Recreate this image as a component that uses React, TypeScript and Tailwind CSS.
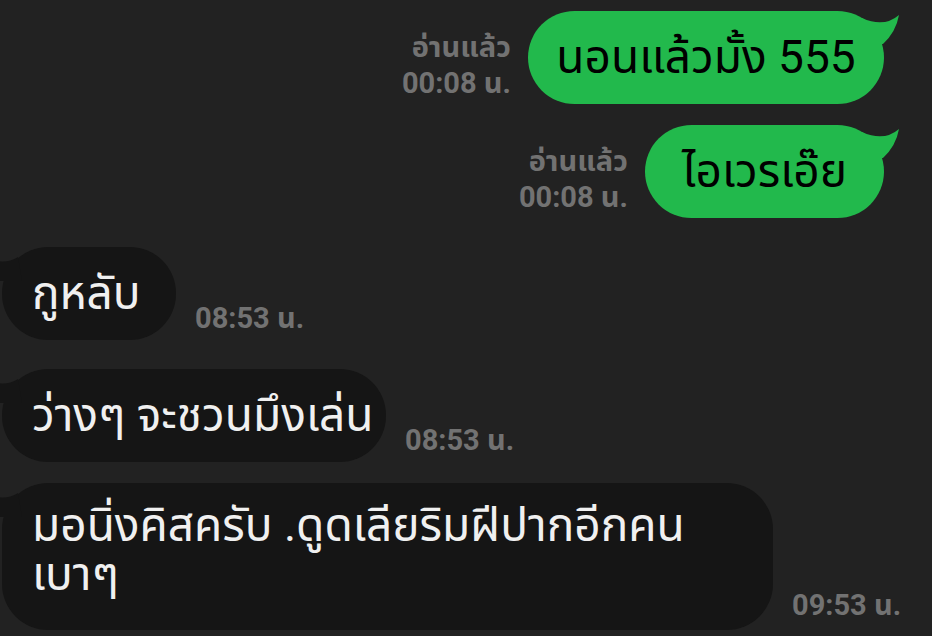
const GreenTail = () => (
  <svg
    className="absolute right-[-20px] top-[-11px]"
    width="50"
    height="50"
    viewBox="0 0 50 50"
  >
    <path d="M8 18 Q30 28 45 15 Q42 32 29 44 L8 44 Z" fill="#22b94c" />
  </svg>
);

const DarkTail = () => (
  <svg
    className="absolute left-[-4px] top-[8px]"
    width="30"
    height="30"
    viewBox="0 0 30 30"
  >
    <path d="M0 6 Q10 8 20 2 L24 26 L0 26 Z" fill="#151515" />
  </svg>
);

const Sent = ({ text, time, width }: { text: string; time: string; width: string }) => (
  <div className="flex items-end justify-end gap-[17px] pr-[48px]">
    <div className="flex flex-col items-end pb-[3px] text-[29px] font-bold leading-[36px] text-[#727272]">
      <span>อ่านแล้ว</span>
      <span>{time}</span>
    </div>
    <div
      className={`relative flex h-[93px] items-center justify-center rounded-full bg-[#22b94c] text-[46px] text-black ${width}`}
    >
      <GreenTail />
      <span className="relative whitespace-nowrap">{text}</span>
    </div>
  </div>
);

const Received = ({
  lines,
  time,
  width,
  tall,
}: {
  lines: string[];
  time: string;
  width: string;
  tall?: boolean;
}) => (
  <div className="flex items-end gap-[19px] pl-[2px]">
    <div
      className={`relative flex flex-col rounded-[46px] bg-[#151515] pl-[30px] text-[46px] leading-[49px] text-[#f0f0f0] ${
        tall ? "h-[147px] justify-start pt-[18px]" : "h-[93px] justify-center"
      } ${width}`}
    >
      <DarkTail />
      {lines.map((l) => (
        <p key={l} className="relative whitespace-nowrap">
          {l}
        </p>
      ))}
    </div>
    <span
      className={`text-[29px] font-bold leading-[36px] text-[#727272] ${
        tall ? "pb-[7px]" : "pb-[4px]"
      }`}
    >
      {time}
    </span>
  </div>
);

export default function App() {
  return (
    <div
      className="flex h-[636px] w-[932px] flex-col overflow-hidden bg-[#222222] pt-[11px]"
      style={{ fontFamily: "Roboto, 'Noto Sans Thai', 'Noto Sans', sans-serif" }}
    >
      <Sent text="นอนแล้วมั้ง 555" time="00:08 น." width="w-[356px]" />
      <div className="h-[21px]" />
      <Sent text="ไอเวรเอ๊ย" time="00:08 น." width="w-[239px]" />
      <div className="h-[29px]" />
      <Received lines={["กูหลับ"]} time="08:53 น." width="w-[174px]" />
      <div className="h-[29px]" />
      <Received lines={["ว่างๆ จะชวนมึงเล่น"]} time="08:53 น." width="w-[384px]" />
      <div className="h-[21px]" />
      <Received
        lines={["มอนิ่งคิสครับ .ดูดเลียริมฝีปากอีกคน", "เบาๆ"]}
        time="09:53 น."
        width="w-[771px]"
        tall
      />
    </div>
  );
}
